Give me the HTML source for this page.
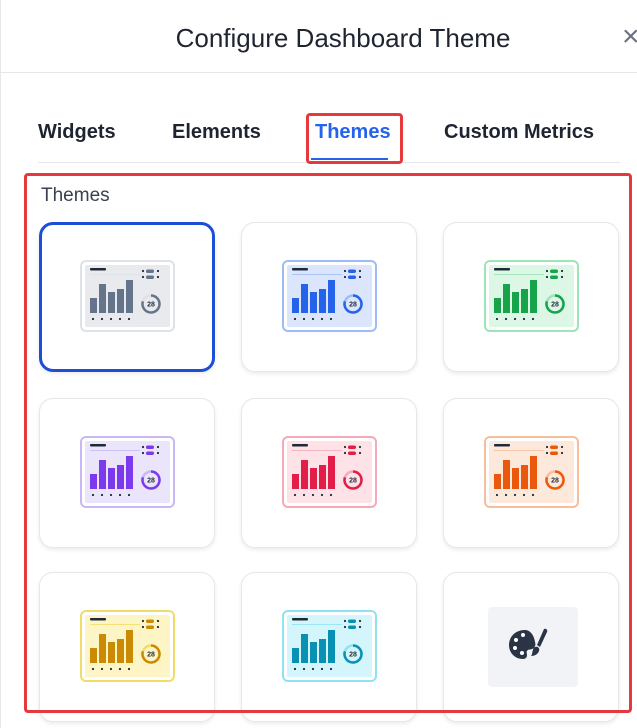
<!DOCTYPE html>
<html><head><meta charset="utf-8"><style>
*{margin:0;padding:0;box-sizing:border-box}
body{width:637px;height:728px;overflow:hidden;background:#fff;font-family:"Liberation Sans","DejaVu Sans",sans-serif;position:relative;color:#1f2937}
.title{position:absolute;top:23px;left:0;width:686px;text-align:center;font-size:26px;color:#1e2430}
.close{position:absolute;left:622px;top:20px;font-size:30px;color:#6b7280}
.hdr{position:absolute;top:72px;left:0;width:637px;height:1px;background:#e5e7eb}
.lb{position:absolute;top:0;left:0;width:1px;height:728px;background:#e5e7eb}
.tab{position:absolute;top:121px;font-size:20px;font-weight:bold;color:#1e2430}
.tabline{position:absolute;top:162px;left:38px;width:582px;height:1px;background:#e5e7eb}
.act{position:absolute;top:158px;left:311px;width:77px;height:2px;background:#2563eb}
.rb{position:absolute;border:3px solid #e5393d;border-radius:4px}
.lbl{position:absolute;left:41px;top:185px;font-size:19px;color:#374151}
.card{position:absolute;width:176px;height:150px;border:1px solid #e5e7eb;border-radius:14px;background:#fff;box-shadow:0 2px 4px rgba(0,0,0,.08)}
.card svg{position:absolute;left:40px;top:37px}
.sel{border:3px solid #1d4ed8}
.sel svg{left:38px;top:35px}
</style></head><body>
<div class="lb"></div>
<div class="title">Configure Dashboard Theme</div>
<div class="close">×</div>
<div class="hdr"></div>
<div class="tab" style="left:38px">Widgets</div>
<div class="tab" style="left:172px">Elements</div>
<div class="tab" style="left:315px;color:#2563eb">Themes</div>
<div class="tab" style="left:444px">Custom Metrics</div>
<div class="tabline"></div>
<div class="act"></div>
<div class="rb" style="left:306px;top:113px;width:97px;height:51px"></div>
<div class="lbl">Themes</div>

<svg width="0" height="0" style="position:absolute"><defs>
<g id="pv">
<rect x="1" y="1" width="93" height="70" rx="5" fill="#fff" stroke="var(--bd)" stroke-width="2"/>
<rect x="5" y="5" width="85" height="62" rx="2" fill="var(--bg)"/>
<rect x="10" y="8" width="16" height="2.5" rx="1" fill="#1f2937"/>
<rect x="10" y="14" width="50" height="0.8" fill="var(--bd)"/>
<rect x="10" y="38" width="7" height="15" fill="var(--c)"/>
<rect x="19" y="24" width="7" height="29" fill="var(--c)"/>
<rect x="28" y="32" width="7" height="21" fill="var(--c)"/>
<rect x="37" y="29" width="7" height="24" fill="var(--c)"/>
<rect x="46" y="20" width="7" height="33" fill="var(--c)"/>
<g fill="#1f2937"><circle cx="13" cy="59" r="1.1"/><circle cx="22" cy="59" r="1.1"/><circle cx="31" cy="59" r="1.1"/><circle cx="40" cy="59" r="1.1"/><circle cx="49" cy="59" r="1.1"/>
<circle cx="63" cy="11" r="1.1"/><circle cx="63" cy="17" r="1.1"/><circle cx="78" cy="11" r="1.1"/><circle cx="78" cy="17" r="1.1"/></g>
<rect x="66" y="9.5" width="8" height="3.5" rx="1.7" fill="var(--c)"/>
<rect x="66" y="15.5" width="8" height="3.5" rx="1.7" fill="var(--c)"/>
<circle cx="71" cy="44" r="8.5" fill="none" stroke="var(--bd)" stroke-width="2.5"/>
<path d="M71 35.5 A8.5 8.5 0 1 1 62.9 41.4" fill="none" stroke="var(--c)" stroke-width="2.5"/>
<text x="71" y="46.5" font-size="7" font-weight="bold" text-anchor="middle" fill="#1f2937" font-family="Liberation Sans,sans-serif">28</text>
</g></defs></svg>

<div class="card sel" style="left:39px;top:222px"><svg width="95" height="72" style="--c:#64748b;--bg:#e8eaee;--bd:#dde1e8"><use href="#pv"/></svg></div>
<div class="card" style="left:241px;top:222px"><svg width="95" height="72" style="--c:#2563eb;--bg:#dbe6fc;--bd:#9dbcf7"><use href="#pv"/></svg></div>
<div class="card" style="left:443px;top:222px"><svg width="95" height="72" style="--c:#16a34a;--bg:#dcf7e6;--bd:#9be5b6"><use href="#pv"/></svg></div>
<div class="card" style="left:39px;top:398px"><svg width="95" height="72" style="--c:#7c3aed;--bg:#ebe5fc;--bd:#c9b7f7"><use href="#pv"/></svg></div>
<div class="card" style="left:241px;top:398px"><svg width="95" height="72" style="--c:#e11d48;--bg:#fde2e7;--bd:#f5a9b9"><use href="#pv"/></svg></div>
<div class="card" style="left:443px;top:398px"><svg width="95" height="72" style="--c:#ea580c;--bg:#fde9dc;--bd:#f8be9a"><use href="#pv"/></svg></div>
<div class="card" style="left:39px;top:572px"><svg width="95" height="72" style="--c:#ca8a04;--bg:#fdf5c6;--bd:#f1dc6a"><use href="#pv"/></svg></div>
<div class="card" style="left:241px;top:572px"><svg width="95" height="72" style="--c:#0891b2;--bg:#d3f5fb;--bd:#8de3f0"><use href="#pv"/></svg></div>
<div class="card" style="left:443px;top:572px">
<div style="position:absolute;left:44px;top:34px;width:90px;height:80px;background:#f1f3f7;border-radius:4px"></div>
<svg width="50" height="40" viewBox="0 0 50 40" style="left:63px;top:53px">
<path d="M18 4C8 4 2 11 2 19c0 8 6 14 14 14 3 0 4-2 4-4 0-2-1-3 0-4 1-2 3-1 5-2 3-1 4-4 3-7-1-7-5-12-10-12z" fill="#2b3445"/>
<g fill="#fff"><circle cx="9" cy="14" r="2"/><circle cx="16" cy="9" r="2"/><circle cx="8" cy="22" r="2"/><circle cx="15" cy="27" r="2"/></g>
<path d="M37 3c2-1 4 1 3 3l-7 15-3-2z" fill="#2b3445"/>
<path d="M28 21c3-1 5 1 4 4-1 3-4 5-8 5 2-2 1-8 4-9z" fill="#2b3445"/>
</svg></div>

<div class="rb" style="left:24px;top:173px;width:608px;height:540px"></div>
</body></html>
